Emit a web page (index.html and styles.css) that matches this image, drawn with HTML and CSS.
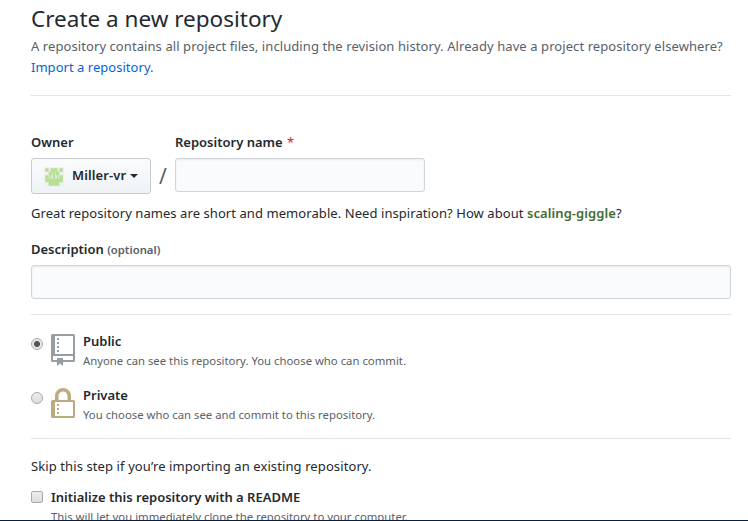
FILE: index.html
```html
<!DOCTYPE html>
<html lang="en">
<head>
<meta charset="utf-8">
<title>Create a New Repository</title>
<link rel="stylesheet" href="styles.css">
</head>
<body>
<main class="page">
  <header class="subhead">
    <h2 class="title">Create a new repository</h2>
    <p class="lead">A repository contains all project files, including the revision history. Already have a project repository elsewhere?<br><a class="link" href="#">Import a repository.</a></p>
  </header>
  <form class="form">
    <div class="name-row">
      <div class="field owner">
        <span class="label">Owner</span>
        <button class="select" type="button">
          <svg class="avatar" width="20" height="20" viewBox="0 0 20 20">
            <rect width="20" height="20" fill="#f0f0f0"/>
            <path fill="#b7e095" d="M1.200 1.200h3.500v3.500H1.200zM6.500 1.200h7v3.500h-7zM15.300 1.200h3.500v3.500h-3.500zM4.700 4.700h3.500v3.500H4.700zM11.800 4.700h3.500v3.500h-3.500zM8.700 4.700h2.600v7H8.700zM1.200 8.200h3.500v3.500H1.200zM15.300 8.200h3.500v3.500h-3.500zM5.500 8.200h1.700v3.500H5.500zM12.800 8.200h1.700v3.500h-1.700zM1.200 11.700h17.600v3.500H1.200zM4.700 15.200h10.600v3.500H4.700z"/>
          </svg>
          <span class="owner-name">Miller-vr</span><i class="caret"></i>
        </button>
      </div>
      <span class="slash">/</span>
      <div class="field repo">
        <label class="label" for="name">Repository name <span class="required">*</span></label>
        <input class="input" id="name" type="text">
      </div>
    </div>
    <p class="hint">Great repository names are short and memorable. Need inspiration? How about <strong class="suggestion">scaling-giggle</strong>?</p>
    <div class="field description">
      <label class="label" for="desc">Description <span class="note">(optional)</span></label>
      <input class="input" id="desc" type="text">
    </div>
    <div class="visibility">
      <label class="choice">
        <input class="radio" type="radio" name="visibility" checked>
        <svg class="icon" width="24" height="32" viewBox="0 0 24 32" fill="#959da5">
          <path fill-rule="evenodd" d="M1.500 0h21Q24 0 24 1.500v25Q24 28 22.500 28H12v4l-3-2.500L6 32v-4H1.500Q0 28 0 26.500v-25Q0 0 1.500 0zM4 2v18h18V2zM2 22v4h4v-2h6v2h10v-4z"/>
          <path d="M6 4h2v2H6zM6 8h2v2H6zM6 12h2v2H6zM6 16h2v2H6z"/>
        </svg>
        <span class="choice-text"><b class="choice-title">Public</b><span class="small">Anyone can see this repository. You choose who can commit.</span></span>
      </label>
      <label class="choice">
        <input class="radio" type="radio" name="visibility">
        <svg class="icon" width="24" height="32" viewBox="0 0 24 32" fill="#bcab80">
          <path fill-rule="evenodd" d="M4 12V8a8 8 0 0 1 16 0v4h2.500Q24 12 24 13.500v15Q24 30 22.500 30h-21Q0 30 0 28.500v-15Q0 12 1.500 12zM7.500 12h9V8a4.500 4.500 0 0 0-9 0zM4 14v14h18V14z"/>
          <path d="M6 16h2v2H6zM6 20h2v2H6zM6 24h2v2H6z"/>
        </svg>
        <span class="choice-text"><b class="choice-title">Private</b><span class="small">You choose who can see and commit to this repository.</span></span>
      </label>
    </div>
    <div class="init">
      <p class="skip">Skip this step if you’re importing an existing repository.</p>
      <label class="readme">
        <input class="checkbox" type="checkbox">
        <span class="choice-text"><b class="choice-title">Initialize this repository with a README</b><span class="small">This will let you immediately clone the repository to your computer.</span></span>
      </label>
    </div>
  </form>
</main>
</body>
</html>
```
FILE: styles.css
```css
* { box-sizing: border-box; }
body {
  margin: 0;
  height: 521px;
  overflow: hidden;
  background: #fff;
  border-bottom: 1px solid #0b1f3c;
  color: #24292e;
  font: 13px/21px "Noto Sans", sans-serif;
}
.page { width: 700px; height: 520px; margin-left: 31px; padding-top: 1px; overflow: hidden; }
p, h2 { margin: 0; }
.subhead { height: 95px; border-bottom: 1px solid #e1e4e8; }
.title { font-size: 22.5px; line-height: 35px; font-weight: 400; }
.lead { color: #586069; letter-spacing: .08px; white-space: nowrap; }
.link { color: #0366d6; text-decoration: none; letter-spacing: .03px; }
.form { padding-top: 36px; }
.name-row { display: flex; align-items: flex-start; height: 62px; }
.field { display: flex; flex-direction: column; }
.label { font-weight: 600; line-height: 21px; margin-bottom: 5px; white-space: nowrap; }
.owner { width: 120px; }
.repo { width: 250px; }
.required { color: #cb2431; font-weight: 400; margin-left: 1px; }
.select {
  display: flex;
  align-items: center;
  width: 120px;
  height: 36px;
  padding: 0 0 0 12px;
  border: 1px solid #c8ccd0;
  border-radius: 3px;
  background: linear-gradient(#fafbfc, #eff3f6);
  color: #24292e;
  font: 600 13px/21px "Noto Sans", sans-serif;
  letter-spacing: .1px;
}
.avatar { margin-right: 8px; margin-top: 2px; }
.owner-name { margin-bottom: 2px; }
.caret { margin-left: 4px; border: 4px solid transparent; border-top-color: #24292e; border-bottom: 0; }
.slash { width: 24px; padding-top: 32px; text-align: center; font-size: 21px; line-height: 24px; color: #586069; }
.input {
  width: 100%;
  height: 34px;
  border: 1px solid #d1d5da;
  border-radius: 3px;
  background: #fafbfc;
  box-shadow: inset 0 1px 2px rgba(27, 31, 35, .075);
  outline: none;
}
.hint { margin-top: 9px; letter-spacing: .07px; white-space: nowrap; }
.suggestion { color: #3f6c30; font-weight: 600; }
.description { margin-top: 15px; width: 700px; }
.note { font-size: 11.3px; color: #586069; }
.visibility { margin-top: 15px; height: 125px; border: solid #e1e4e8; border-width: 1px 0; padding-top: 16px; }
.choice { display: flex; height: 54px; }
.radio, .checkbox {
  appearance: none;
  flex: none;
  width: 12px;
  height: 12px;
  margin: 7px 8px 0 0;
  border: 1px solid #aaa;
  background: linear-gradient(#eee, #dcdcdc);
}
.radio { border-radius: 50%; }
.radio:checked { background: radial-gradient(circle, #555 0 2.7px, #e6e6e6 3.3px); }
.icon { flex: none; margin: 3px 8px 0 0; }
.choice-text { display: flex; flex-direction: column; white-space: nowrap; }
.choice-title { font-weight: 600; line-height: 20px; }
.small { font-size: 11.33px; line-height: 20px; color: #586069; }
.init { padding-top: 17px; }
.skip { letter-spacing: .1px; }
.readme { display: flex; margin-top: 10px; }
.checkbox { margin-top: 4px; border-radius: 2px; }
```
